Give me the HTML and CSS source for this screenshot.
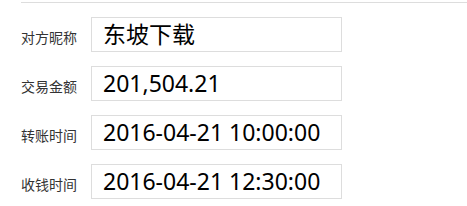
FILE: index.html
```html
<!DOCTYPE html>
<html lang="zh-CN">
<head>
    <meta charset="UTF-8">
    <title>转账信息</title>
    <link rel="stylesheet" href="styles.css">
</head>
<body>
    <div class="panel">
        <div class="row">
            <span class="label">对方昵称</span>
            <div class="value">东坡下载</div>
        </div>
        <div class="row">
            <span class="label">交易金额</span>
            <div class="value">201,504.21</div>
        </div>
        <div class="row">
            <span class="label">转账时间</span>
            <div class="value">2016-04-21 10:00:00</div>
        </div>
        <div class="row">
            <span class="label">收钱时间</span>
            <div class="value">2016-04-21 12:30:00</div>
        </div>
    </div>
</body>
</html>
```

FILE: styles.css
```css
body {
    margin: 0;
    padding: 0;
    background: #fff;
    font-family: "Noto Sans", "Noto Sans CJK SC", sans-serif;
}

.panel {
    margin: 2px 0 0 21px;
    padding-top: 14px;
    border-top: 1px solid #ddd;
}

.row {
    display: flex;
    align-items: baseline;
    margin-bottom: 14px;
}

.label {
    width: 70px;
    font-size: 14px;
    color: #333;
}

.value {
    width: 238px;
    height: 33px;
    line-height: 33px;
    padding-left: 11px;
    border: 1px solid #ddd;
    font-size: 23px;
    color: #000;
    white-space: nowrap;
}
```
